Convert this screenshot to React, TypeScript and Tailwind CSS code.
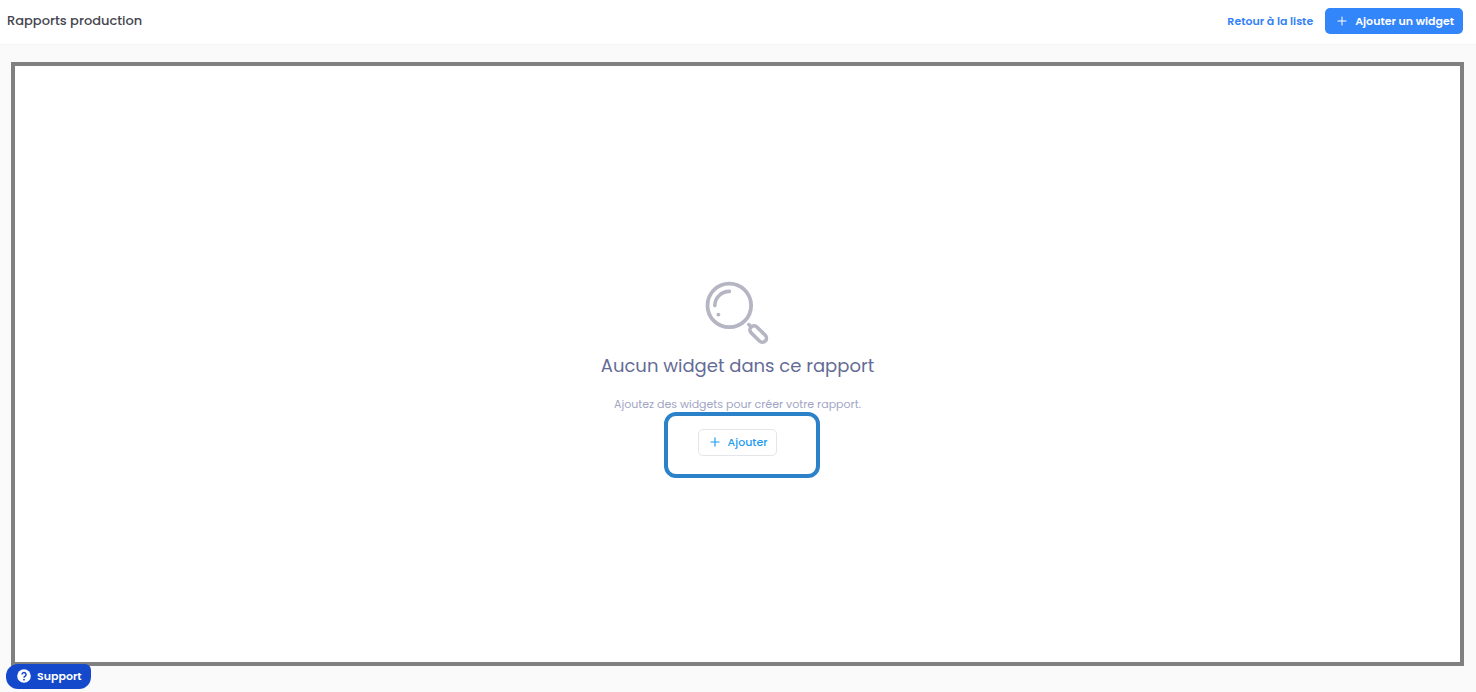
import type { ReactNode } from "react";
import { Plus } from "lucide-react";

function SearchIllustration() {
  return (
    <svg
      className="h-16 w-16"
      viewBox="0 0 64 64"
      fill="none"
      stroke="#b5b5c3"
      strokeLinecap="round"
      strokeLinejoin="round"
      aria-hidden="true"
    >
      <circle cx="24.3" cy="24.4" r="21.8" strokeWidth="3.8" />
      <path d="M9.8 24.6A14.4 14.4 0 0 1 24.4 10.4" strokeWidth="3.6" />
      <circle cx="13.4" cy="33.6" r="1.9" fill="#b5b5c3" stroke="none" />
      <path d="M43.8 43.6 46.2 46" strokeWidth="3.6" />
      <rect x="44.8" y="44.8" width="20" height="8.2" rx="4.1" strokeWidth="3.6" transform="rotate(45 49 49)" />
    </svg>
  );
}

function HelpIcon() {
  return (
    <svg className="h-[14px] w-[14px]" viewBox="0 0 14 14" aria-hidden="true">
      <circle cx="7" cy="7" r="6.8" fill="#fff" />
      <path
        d="M5 5.5A2 2 0 1 1 8.2 7.1C7.4 7.6 7 7.9 7 8.8"
        fill="none"
        stroke="#1549cc"
        strokeWidth="1.5"
      />
      <circle cx="7" cy="10.7" r="0.9" fill="#1549cc" />
    </svg>
  );
}

function Highlight({ children }: { children: ReactNode }) {
  return (
    <div className="relative">
      {children}
      <div className="pointer-events-none absolute -top-[17px] -right-[43px] -bottom-[22px] -left-[34px] rounded-xl border-4 border-[#2b82c9]" />
    </div>
  );
}

export default function App() {
  return (
    <div className="flex min-h-screen flex-col bg-[#fafafa] font-[Poppins,Inter,sans-serif]">
      <header className="flex h-[45px] items-center justify-between border-b border-[#f5f5f5] bg-white pr-[13px] pb-[2px] pl-[7px]">
        <h1 className="text-[13px] leading-5 font-medium text-[#464650]">Rapports production</h1>
        <div className="flex items-center gap-3">
          <a href="#" className="pb-px text-[11px] leading-4 font-semibold text-[#3482f6]">
            Retour à la liste
          </a>
          <button
            type="button"
            className="flex h-[26px] items-center gap-[6px] rounded-[5px] bg-[#3385fa] pr-[9px] pb-px pl-[10px] text-[11px] leading-4 font-semibold text-white"
          >
            <Plus className="h-[14px] w-[14px]" strokeWidth={1.8} />
            Ajouter un widget
          </button>
        </div>
      </header>

      <main className="flex flex-1 flex-col pt-[17px] pr-3 pb-[26px] pl-[11px]">
        <section className="flex flex-1 flex-col items-center justify-center border-4 border-[#808080] bg-white">
          <div className="flex flex-col items-center pt-[9px]">
            <SearchIllustration />
            <h2 className="mt-[7px] text-[18px] leading-7 text-[#656b96]">Aucun widget dans ce rapport</h2>
            <p className="mt-[15px] mb-4 text-[11px] leading-[18px] text-[#a1a5c3]">
              Ajoutez des widgets pour créer votre rapport.
            </p>
            <Highlight>
              <button
                type="button"
                className="flex h-[27px] items-center gap-[6px] rounded-[5px] border border-[#e4e6ea] bg-white pr-[9px] pb-px pl-[9px] text-[11px] leading-4 font-medium text-[#1b9cf2]"
              >
                <Plus className="h-[14px] w-[14px]" strokeWidth={2} />
                Ajouter
              </button>
            </Highlight>
          </div>
        </section>
      </main>

      <button
        type="button"
        className="fixed bottom-[3px] left-[6px] flex h-[25px] items-center gap-[6px] rounded-tl-xl rounded-tr-md rounded-br-xl rounded-bl-xl bg-[#1549cc] pr-[9px] pb-px pl-[11px] text-[11px] leading-4 font-semibold text-white"
      >
        <HelpIcon />
        Support
      </button>
    </div>
  );
}
